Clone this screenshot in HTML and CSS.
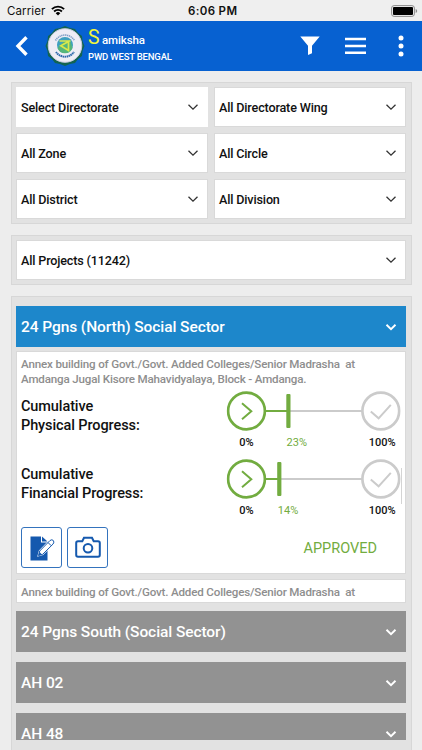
FILE: index.html
```html
<!DOCTYPE html>
<html lang="en">
<head>
<meta charset="utf-8">
<title>Samiksha</title>
<link rel="stylesheet" href="styles.css">
</head>
<body>
<svg width="0" height="0" class="defs">
  <symbol id="chev" viewBox="0 0 12 8"><path d="M1.5 1.7 6 6.1l4.500-4.400" fill="none" stroke="currentColor"/></symbol>
  <symbol id="start" viewBox="0 0 40 40"><circle cx="20" cy="20" r="18.400" fill="#fff" stroke="#72ac40" stroke-width="2.700"/><path d="M15.500 12.200 24.800 20.200l-9.300 8" fill="none" stroke="#72ac40" stroke-width="2"/></symbol>
  <symbol id="done" viewBox="0 0 40 40"><circle cx="20" cy="20" r="18.400" fill="#fff" stroke="#cbcbcb" stroke-width="2.700"/><path d="M10 20.500 17.800 27.300 30 13.800" fill="none" stroke="#cbcbcb" stroke-width="2"/></symbol>
</svg>
<div class="status">
  <span class="carrier">Carrier</span>
  <svg class="wifi" width="14" height="11" viewBox="0 0 14 11"><path d="M.9 4.200a8.600 8.600 0 0 1 12.200 0M3.100 6.500a5.500 5.500 0 0 1 7.800 0" fill="none" stroke="#000" stroke-width="1.900"/><path d="M4.700 8.200a3.300 3.300 0 0 1 4.600 0L7 10.600z"/></svg>
  <span class="time">6:06 PM</span>
  <svg class="battery" width="27" height="12" viewBox="0 0 27 12"><rect x=".6" y=".6" width="22.800" height="10.800" rx="2.500" fill="none" stroke="#8b8b8b"/><rect x="2" y="2" width="20" height="8" rx="1"/><path d="M24.700 4v4q1.500-.6 1.500-2t-1.500-2" fill="#8b8b8b"/></svg>
</div>
<header class="bar">
  <svg class="back" width="14" height="22" viewBox="0 0 14 22"><path d="M11.500 2.300 3 11l8.500 8.700" fill="none" stroke="#fff" stroke-width="3.400"/></svg>
  <svg class="logo" width="40" height="42" viewBox="0 0 40 42">
    <path d="M20 1l5 2 5 1 3 4 4 3 .5 5L39.500 21l-2 5-.5 5-4 3-3 4-5 1-5 2-5-2-5-1-3-4-4-3-.5-5L.5 21l2-5L3 11l4-3 3-4 5-1z" fill="#126451"/>
    <circle cx="20" cy="20.500" r="16.800" fill="#eeedf5" stroke="#c9cbe0"/>
    <path d="M10.500 15.500a11 11 0 0 1 19 0" fill="none" stroke="#7c9cc4" stroke-width="1.600" stroke-dasharray="1.300 .6"/>
    <path d="M11 27a11 11 0 0 0 18 0" fill="none" stroke="#2c67ab" stroke-width="2" stroke-dasharray="1.500 .5"/>
    <circle cx="20" cy="20" r="8" fill="#3fa0c0"/>
    <path d="M12.500 23a8 8 0 0 0 15 0l-2.500-8-7 2z" fill="#54b57b"/>
    <path d="M14.500 16h11M23.500 16v9.500L15.800 20.800l7.700-4.300" fill="none" stroke="#d9e84a" stroke-width="1.700"/>
  </svg>
  <div class="brand">
    <div class="name"><span class="initial">S</span> <span class="rest">amiksha</span></div>
    <div class="dept">PWD WEST BENGAL</div>
  </div>
  <svg class="filter" width="20" height="20" viewBox="0 0 20 20"><path d="M.3.500h19.400L12 9.800v7.400l-4 1.800V9.800z" fill="#fff"/></svg>
  <svg class="menu" width="21" height="18" viewBox="0 0 21 18"><path d="M0 2h21M0 9h21M0 15.800h21" stroke="#fff" stroke-width="2.400"/></svg>
  <svg class="more" width="6" height="22" viewBox="0 0 6 22"><g fill="#fff"><circle cx="3" cy="3" r="2.500"/><circle cx="3" cy="11" r="2.500"/><circle cx="3" cy="19" r="2.500"/></g></svg>
</header>
<main>
  <section class="panel filters">
    <div class="select active"><span>Select Directorate</span><svg class="chev"><use href="#chev"/></svg></div>
    <div class="select"><span>All Directorate Wing</span><svg class="chev"><use href="#chev"/></svg></div>
    <div class="select"><span>All Zone</span><svg class="chev"><use href="#chev"/></svg></div>
    <div class="select"><span>All Circle</span><svg class="chev"><use href="#chev"/></svg></div>
    <div class="select"><span>All District</span><svg class="chev"><use href="#chev"/></svg></div>
    <div class="select"><span>All Division</span><svg class="chev"><use href="#chev"/></svg></div>
  </section>
  <section class="panel">
    <div class="select"><span>All Projects (11242)</span><svg class="chev"><use href="#chev"/></svg></div>
  </section>
  <section class="panel list">
    <div class="group open"><span>24 Pgns (North) Social Sector</span><svg class="chev"><use href="#chev"/></svg></div>
    <article class="card">
      <p class="desc">Annex building of Govt./Govt. Added Colleges/Senior Madrasha  at
Amdanga Jugal Kisore Mahavidyalaya, Block - Amdanga.</p>
      <div class="progress">
        <div class="label">Cumulative<br>Physical Progress:</div>
        <svg width="180" height="68" viewBox="226 391 180 68">
          <path d="M266 411h96" stroke="#cbcbcb" stroke-width="2"/><path d="M265 411h23" stroke="#72ac40" stroke-width="2"/>
          <rect x="286.300" y="394" width="4.200" height="34" rx="1" fill="#72ac40"/>
          <use href="#start" x="226.500" y="391" width="40" height="40"/><use href="#done" x="360.800" y="391" width="40" height="40"/>
          <text class="mark" x="246.500" y="446">0%</text><text class="mark value" x="296.800" y="446">23%</text><text class="mark" x="382.300" y="446">100%</text>
        </svg>
      </div>
      <div class="progress">
        <div class="label">Cumulative<br>Financial Progress:</div>
        <svg width="180" height="68" viewBox="226 391 180 68">
          <path d="M266 411h96" stroke="#cbcbcb" stroke-width="2"/><path d="M265 411h14" stroke="#72ac40" stroke-width="2"/>
          <rect x="277.200" y="394" width="4.200" height="34" rx="1" fill="#72ac40"/>
          <use href="#start" x="226.500" y="391" width="40" height="40"/><use href="#done" x="360.800" y="391" width="40" height="40"/>
          <text class="mark" x="246.500" y="446">0%</text><text class="mark value" x="288" y="446">14%</text><text class="mark" x="382.300" y="446">100%</text>
          <path d="M401.500 400v36" stroke="#d4d4d4"/>
        </svg>
      </div>
      <div class="actions">
        <div class="btn"><svg width="26" height="26" viewBox="0 0 26 26"><path d="M1.500 1.500H12v6h6.500v18h-17z" fill="#1559ae"/><path d="M13 1.500 18.500 6.500H13z" fill="#1559ae"/><path d="M9.500 20.500l1.200-4.500L21 5.500q2-1.500 3.300 0t-.2 3.500L13.700 19.300z" fill="#fff" stroke="#fff" stroke-width="1.800"/><path d="M9.500 20.500l1.200-4.500L21 5.500q2-1.500 3.300 0t-.2 3.500L13.700 19.300zM19 7.500l3.200 3.200" fill="#fff" stroke="#1559ae" stroke-width="1"/><path d="M9.500 20.500l1-3.500 2.500 2.500z" fill="#1559ae"/></svg></div>
        <div class="btn"><svg width="26" height="26" viewBox="0 0 26 26"><path d="M3 6.200h4.300l1.700-3.500h8l1.700 3.500H23q1.800 0 1.800 1.800v12q0 1.800-1.800 1.800H3Q1.200 21.800 1.200 20V8Q1.200 6.200 3 6.200z" fill="none" stroke="#1559ae" stroke-width="2"/><circle cx="13" cy="13.300" r="4.300" fill="none" stroke="#1559ae" stroke-width="2"/></svg></div>
        <span class="state">APPROVED</span>
      </div>
    </article>
    <article class="card peek"><p class="desc">Annex building of Govt./Govt. Added Colleges/Senior Madrasha  at</p></article>
    <div class="group"><span>24 Pgns South (Social Sector)</span><svg class="chev"><use href="#chev"/></svg></div>
    <div class="group"><span>AH 02</span><svg class="chev"><use href="#chev"/></svg></div>
    <div class="group cut"><span>AH 48</span><svg class="chev"><use href="#chev"/></svg></div>
  </section>
</main>
</body>
</html>
```
FILE: styles.css
```css
* { box-sizing: border-box; }
html, body { margin: 0; height: 750px; overflow: hidden; }
body { width: 422px; background: #ededed; font-family: Roboto, sans-serif; color: #111; display: flex; flex-direction: column; }
svg { display: block; flex: none; }
.defs { position: absolute; }
.status { height: 21px; background: #efefef; display: flex; align-items: center; font-family: Inter, sans-serif; font-size: 11.5px; flex: none; padding: 1px 5px 0 7px; }
.carrier { width: 44px; letter-spacing: .1px; }
.time { margin-left: 123px; width: 53px; font-weight: 600; white-space: nowrap; letter-spacing: .35px; }
.battery { margin-left: auto; margin-right: -1px; }
.wifi { margin-top: -1px; }
.bar { height: 50px; background: #0761d1; flex: none; display: flex; align-items: center; padding-left: 15px; color: #fff; }
.back { margin-top: -1px; }
.logo { margin-left: 16px; margin-top: -1px; }
.brand { margin-left: 3px; width: 212px; align-self: flex-start; }
.name { display: flex; align-items: baseline; height: 28px; line-height: 33px; font-weight: 500; font-size: 11.5px; gap: 2px; letter-spacing: -.1px; }
.initial { color: #f3f63c; font-size: 19.5px; font-weight: 400; letter-spacing: 0; width: 12px; }
.dept { font-size: 9.5px; line-height: 15px; font-weight: 500; letter-spacing: -.18px; }
.filter { margin-top: -1px; }
.menu { margin-left: 25px; }
.more { margin-left: 32px; }
main { flex: 1; min-height: 0; display: flex; flex-direction: column; gap: 11px; padding: 11px 10px 0 11px; }
.panel { border: 1px solid #d7d7d7; background: #e2e2e2; padding: 4px 5px 4px 4px; flex: none; }
.filters { display: grid; grid-template-columns: 192px 192px; gap: 6px; }
.select { height: 40px; background: #fff; border: 1px solid #d9d9d9; padding: 0 8px 0 4px; display: flex; align-items: center; justify-content: space-between; font-size: 12.6px; font-weight: 500; letter-spacing: -.16px; }
.active { border-color: #fff; }
.chev { width: 12px; height: 8px; stroke-width: 1.3; color: #333; }
.list { flex: 1; border-bottom: 0; padding-top: 9px; }
.group { height: 41px; background: #929292; color: #fff; padding: 0 9px 0 5px; display: flex; align-items: center; justify-content: space-between; font-size: 15.5px; font-weight: 500; letter-spacing: -.08px; margin-bottom: 10px; }
.group .chev { color: #fff; stroke-width: 1.9; }
.open { background: #1d87cb; margin-bottom: 4px; }
.cut { height: 27px; overflow: hidden; align-items: flex-start; padding-top: 12px; }
.cut .chev { margin-top: 5px; }
.card { background: #fff; border: 1px solid #d9d9d9; height: 223px; padding: 5px 0 0 4px; }
.desc { margin: 0; color: #8e8e8e; font-size: 11.6px; line-height: 14.5px; white-space: pre; height: 34px; font-weight: 500; letter-spacing: -.17px; }
.progress { height: 68px; display: flex; justify-content: space-between; }
.progress svg { margin-right: -1px; }
.label { font-size: 14.5px; line-height: 18.7px; font-weight: 500; padding-top: 7px; letter-spacing: -.1px; }
.mark { font-size: 11px; font-weight: 500; text-anchor: middle; fill: #111; }
.value { fill: #72ac40; font-weight: 400; }
.actions { display: flex; align-items: center; gap: 5px; }
.btn { width: 41px; height: 41px; border: 1px solid #3473bd; border-radius: 3px; display: grid; place-items: center; }
.state { margin-left: auto; margin-right: 28px; padding-top: 1px; color: #72ac40; font-size: 14.5px; }
.peek { height: 24px; margin: 5px 0 8px; padding-top: 5px; overflow: hidden; }
```
